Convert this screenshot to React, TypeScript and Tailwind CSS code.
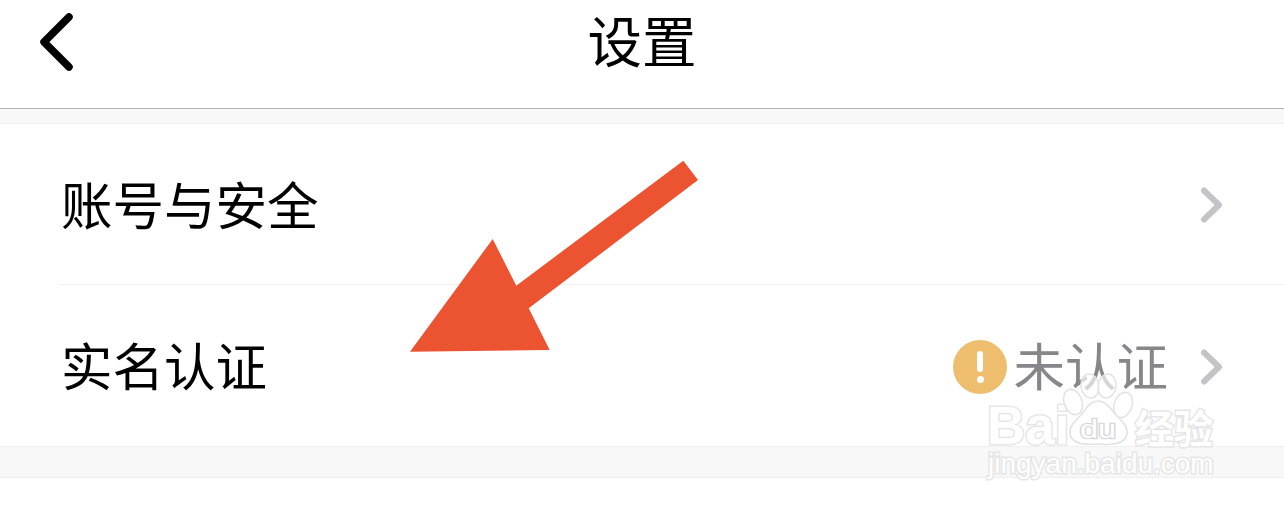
const cjk = "font-['Noto_Sans_CJK_SC','Noto_Sans',sans-serif]";

const Chevron = () => (
  <svg width="21" height="36" viewBox="0 0 21 36" fill="none" className="mt-[2px] block shrink-0">
    <path d="M3 3.5 L18 18 L3 32.5" stroke="#c4c4c6" strokeWidth="6" strokeLinecap="round" strokeLinejoin="round" />
  </svg>
);

const Arrow = () => (
  <svg width="1284" height="510" viewBox="0 0 1284 510" className="absolute left-0 top-0 pointer-events-none">
    <polygon
      points="410,351.7 492.7,239 516.3,285.7 683.3,160.7 698,180 528.7,308.3 549.7,350"
      fill="#ec5330"
    />
  </svg>
);

const Watermark = () => (
  <div className="absolute left-[980px] top-[370px] w-[240px] h-[116px] pointer-events-none">
    <span className="absolute left-[7px] top-[37px] text-[53px] leading-[38px] font-bold text-white [-webkit-text-stroke:3px_#e6e6e6] [paint-order:stroke_fill] font-['Liberation_Sans',sans-serif]">
      Bai
    </span>
    <span className={`absolute left-[155px] top-[35px] text-[39px] leading-[42px] font-bold text-white [-webkit-text-stroke:3px_#e6e6e6] [paint-order:stroke_fill] ${cjk}`}>
      经验
    </span>
    <span className="absolute left-[8px] top-[78px] text-[28px] leading-[32px] text-white [-webkit-text-stroke:3px_#e6e6e6] [paint-order:stroke_fill] font-['Liberation_Sans',sans-serif]">
      jingyan.baidu.com
    </span>
    <svg width="240" height="116" viewBox="0 0 240 116" fill="#ffffff" fillOpacity="0.65" stroke="#e2e2e2" strokeWidth="1.5" className="absolute left-0 top-0">
      <ellipse cx="93" cy="32" rx="9" ry="13" transform="rotate(-20 93 32)" />
      <ellipse cx="110" cy="16" rx="9" ry="12" transform="rotate(-8 110 16)" />
      <ellipse cx="127" cy="16" rx="9" ry="12" transform="rotate(8 127 16)" />
      <ellipse cx="143" cy="35" rx="9" ry="13" transform="rotate(20 143 35)" />
      <path
        fillOpacity="1"
        d="M118 31 C109 31 106 40 100 46 C94 52 89 57 90 64 C92 75 107 75 118 74 C129 75 145 75 147 64 C148 57 143 52 137 46 C131 40 127 31 118 31 Z"
      />
    </svg>
    <span className="absolute left-[100px] top-[47px] origin-left scale-x-130 text-[25px] leading-[24px] text-white [-webkit-text-stroke:2.5px_#d8d8d8] [paint-order:stroke_fill] font-['Liberation_Sans',sans-serif]">
      du
    </span>
  </div>
);

const App = () => {
  return (
    <div className={`relative w-[1284px] h-[510px] overflow-hidden bg-white text-black ${cjk}`}>
      <header className="relative flex h-[109px] items-center justify-center border-b border-[#b0b0b0] pb-[31px]">
        <svg width="36" height="60" viewBox="0 0 36 60" fill="none" className="absolute left-[39px] top-[12px]">
          <path d="M30 5 L5 30 L30 55" stroke="#000" strokeWidth="7.5" strokeLinecap="round" strokeLinejoin="round" />
        </svg>
        <h1 className="text-[54.5px] leading-[60px] font-normal">设置</h1>
      </header>
      <div className="h-[15px] bg-[#f8f8f8] border-b border-[#efefef]" />
      <div className="flex h-[160px] items-center justify-between pl-[61px] pr-[62px]">
        <span className="mb-[3px] text-[51.5px] leading-[60px]">账号与安全</span>
        <Chevron />
      </div>
      <div className="ml-[60px] h-px bg-[#efefef]" />
      <div className="flex h-[161px] items-center justify-between pl-[61px] pr-[62px]">
        <span className="mb-[3px] text-[51.5px] leading-[60px]">实名认证</span>
        <div className="flex items-center">
          <div className="mt-[2px] flex h-[54px] w-[54px] flex-col items-center justify-center gap-[4px] rounded-full bg-[#eebd6e]">
            <div className="h-[21px] w-[6px] rounded-full bg-white" />
            <div className="h-[7px] w-[7px] rounded-full bg-white" />
          </div>
          <span className="mb-[3px] ml-[6px] text-[51.5px] leading-[60px] text-[#87878a]">未认证</span>
          <div className="ml-[33px]">
            <Chevron />
          </div>
        </div>
      </div>
      <div className="h-[32px] bg-[#f8f8f8] border-y border-[#efefef]" />
      <Arrow />
      <Watermark />
    </div>
  );
};

export default App;
